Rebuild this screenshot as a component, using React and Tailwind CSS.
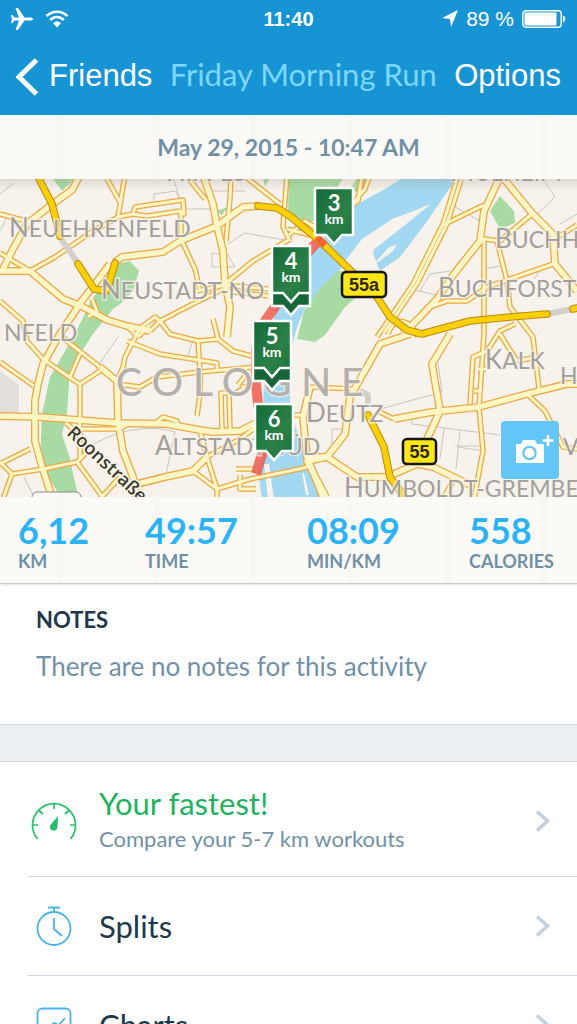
import React from 'react';

const stats = [
  { value: '6,12', label: 'KM' },
  { value: '49:57', label: 'TIME' },
  { value: '08:09', label: 'MIN/KM' },
  { value: '558', label: 'CALORIES' },
];

// Main streets
const wideRoads = [
  'M3 270L13 250L27 225L50 207L72 191L80 176',
  'M0 272H30L63 300L83 308L107 321L127 327L150 332',
  'M115 263L122 258L163 253L180 242L217 227L243 208L260 207',
  'M203 176L213 205L217 227L223 252L225 285L230 308L227 338',
  'M110 265L95 285L81 303L60 335L43 365L38 385L35 402V442L42 468L52 498',
  'M0 417L40 418L117 424L167 425L200 431L213 433L240 432L256 424',
  'M100 368L117 382L118 422L123 452L133 478L137 500',
  'M137 485L165 478L193 472L207 458',
  'M500 178L484 212L480 242L454 275L437 300L420 318L403 335',
  'M410 335L380 345L367 368L350 398L345 435L327 458L307 462L326 498',
  'M504 180L532 214L553 235L555 265L577 292',
  'M394 420L432 413L479 408L527 395L567 385H577',
  'M450 335L432 365L440 412L427 440L424 460',
  'M310 388L303 418L307 458L323 498',
  'M307 458L327 458L357 478H387L417 465L433 468L470 486',
];

// Side streets
const thinRoads = [
  'M0 254L30 272L55 258L90 234L118 218L133 215L147 217L180 212',
  'M0 215L22 221',
  'M118 218L125 176M107 180L121 205',
  'M133 215L135 208L183 201L184 215L180 212',
  'M181 212V240L195 270L200 292',
  'M231 176L230 200L226 242M189 180L205 200',
  'M243 176L280 205M287 176L283 228L290 242',
  'M225 285L253 262L290 240',
  'M197 292L225 286L268 290M225 292L268 297',
  'M150 332L160 322L187 308L223 290',
  'M160 322L155 318L140 329L137 335L125 358L123 368L117 382',
  'M127 327L137 337M150 326L138 338',
  'M0 302L23 322L27 342L43 360L72 380L80 385L100 372',
  'M0 363L34 387',
  'M60 335L68 343L100 368',
  'M80 385V460M80 355L70 378M92 300L97 312L88 318',
  'M66 424L73 430H120L128 425',
  'M157 423L163 418L177 422L178 427',
  'M127 342L160 355L217 364V371',
  'M117 385L140 388L157 378L200 373L256 368',
  'M160 322L170 335L198 342L218 340M213 320L218 340L233 352L255 358',
  'M198 342L200 373V395L197 417',
  'M222 430L221 394H229L230 430',
  'M200 432L207 458L240 440L256 428',
  'M193 472L217 490V500M207 458L217 490',
  'M217 490L250 480L290 472L307 468',
  'M240 476V490H256M236 470H256',
  'M0 463L12 475L43 470L77 463L104 500M12 475L3 500M30 450L0 465',
  'M77 463L88 452M100 500L120 478',
  'M457 180L443 225L413 285L377 338M443 226L484 206',
  'M461 181L447 225L417 285L384 334',
  'M532 215L500 242L484 240V335L479 408L483 452L474 500',
  'M497 242L507 282L510 308L533 338L539 390',
  'M430 308L447 302H467L487 288L553 265',
  'M380 413L394 420M310 388L354 390M287 416H303',
  'M527 395L545 412L563 448L577 450',
  'M487 352L473 358L470 405M517 362L537 358M500 335L517 362M487 352L500 332L515 325',
  'M478 370H486M474 392H482',
  'M352 205L365 190L370 176M340 214L358 202L362 176',
  'M287 230L310 236M287 238L305 222L325 235',
  'M455 478L443 500M555 240L577 226',
  'M388 335C396 314 412 322 418 338',
  'M238 386L246 376M236 394L246 388H242',
];

const footpaths = [
  'M0 232L6 220M0 195L14 184',
  'M154 203V195L176 192L180 202M172 176L180 200',
  'M184 210H214M205 192H245',
  'M228 245L245 234L290 242',
  'M212 254V268H235M212 254L228 256L235 268',
  'M96 370L118 338M24 478L34 498',
  'M80 455C110 430 150 425 175 433L165 480',
  'M188 356L194 338M420 292L430 275L450 272M410 290L436 296',
  'M540 176L555 198L532 220M577 215L560 225',
  'M450 205L480 222M485 270L505 266M534 280L540 272',
  'M380 410L442 393L438 365M412 420V425L500 436',
  'M444 430L440 460M460 432L456 470M479 447H455M484 452L458 448',
  'M332 450V430H345M500 430L540 442',
];

const greens = [
  'M50 176H78L62 192Z',
  'M115 265L130 262L139 272L133 292L120 305L113 310L93 335L70 370L67 415L62 435L70 460L73 475L79 500H62L40 465L42 415L50 378L75 335L90 304Z',
  'M289 176H345L330 200L315 222L305 224L288 212Z',
  'M350 190L358 178H372L362 196Z',
  'M490 212L500 197L514 212L515 224L500 230Z',
  'M216 212L228 208L222 216Z',
  'M263 178H270L265 188Z',
];

const placeNames = [
  { x: 9, y: 238, big: 'N', rest: 'EUEHRENFELD' },
  { x: 101, y: 300, big: 'N', rest: 'EUSTADT-NO' },
  { x: 4, y: 342, big: '', rest: 'NFELD' },
  { x: 166, y: 182, big: 'N', rest: 'IPPES' },
  { x: 450, y: 182, big: 'M', rest: 'ÜLHEIM' },
  { x: 495, y: 249, big: 'B', rest: 'UCHH' },
  { x: 438, y: 298, big: 'B', rest: 'UCHFORST' },
  { x: 485, y: 370, big: 'K', rest: 'ALK' },
  { x: 560, y: 385, big: '', rest: 'H' },
  { x: 306, y: 423, big: 'D', rest: 'EUTZ' },
  { x: 155, y: 456, big: 'A', rest: 'LTSTADT-SÜD' },
  { x: 563, y: 456, big: '', rest: 'V' },
  { x: 344, y: 498, big: 'H', rest: 'UMBOLDT-GREMBE' },
];

const markers = [
  { km: 3, x: 334, y: 189 },
  { km: 4, x: 291, y: 247, stacked: true },
  { km: 5, x: 272, y: 322, stacked: true },
  { km: 6, x: 274, y: 405 },
];

const highways = [
  'M36 174L52 205L60 237',
  'M78 265L94 290L106 292',
  'M115 264L108 288',
  'M258 207L277 209L290 217L320 242L347 268L377 298L390 318L407 331L422 335L440 330L470 322L510 318L547 315',
  'M573 310L577 309',
  'M368 416L384 448L390 478L406 500',
];

const flag = 'M-19 0H19V47H8L0 56L-8 47H-19Z';

const KmMarker = ({ km, x, y, stacked }) => (
  <g transform={`translate(${x} ${y})`}>
    {stacked && <path d={flag} transform="translate(0 13)" fill="#17663a" stroke="#fff" strokeWidth="2.5" />}
    <path d={flag} fill="url(#flagGreen)" stroke="#fff" strokeWidth="2.5" />
    <g fill="#fff" textAnchor="middle" className="font-[Lato,sans-serif] font-bold">
      <text y="23" fontSize="22">{km}</text>
      <text y="36" fontSize="14">km</text>
    </g>
  </g>
);

const RoadSign = ({ x, y, width, children }) => (
  <g>
    <rect x={x} y={y} width={width} height="25" rx="4" fill="#ffe619" stroke="#151515" strokeWidth="2.5" />
    <text
      x={x + width / 2}
      y={y + 19}
      textAnchor="middle"
      fontSize="18"
      fill="#2b2a1a"
      className="font-['Liberation_Sans',sans-serif] font-bold"
    >
      {children}
    </text>
  </g>
);

const RouteMap = () => (
  <svg viewBox="0 180 577 318" className="block w-full h-auto" role="img" aria-label="Route map">
    <defs>
      <linearGradient id="flagGreen" x1="0" y1="0" x2="1" y2="1">
        <stop offset="0" stopColor="#146a38" />
        <stop offset="0.6" stopColor="#2b8148" />
        <stop offset="1" stopColor="#17703b" />
      </linearGradient>
      <linearGradient id="mapShade" x1="0" y1="0" x2="0" y2="1">
        <stop offset="0" stopColor="#8a8578" stopOpacity="0.22" />
        <stop offset="1" stopColor="#8a8578" stopOpacity="0" />
      </linearGradient>
    </defs>
    <rect y="176" width="577" height="326" fill="#f7f3ec" />
    <path d="M0 372L19 386V414H0Z" fill="#e2dfdc" />
    <path d="M310 178L322 176L330 188L312 194Z" fill="#e2dfdc" />
    <g fill="#a8dba3">
      {greens.map((d) => <path key={d} d={d} />)}
    </g>

    {/* Rhine */}
    <path
      d="M408 176L385 190L354 207L330 232L308 258L292 282L276 312C266 345 262 385 264 420L266 450L258 472L262 500H322L308 470L300 440L290 415L290 373C290 350 296 325 307 306L337 274L352 256L364 240L392 220L430 206L372 252L380 272L400 258L425 225L459 176Z"
      fill="#a2d8f2"
    />
    <path d="M430 205L385 225L362 240L345 262L375 276L372 260L374 250L400 230Z" fill="#f7f3ec" />
    <path d="M397 245L388 249L374 265L380 262L393 252Z" fill="#f7f3ec" />
    <path d="M297 340L304 312L320 290L337 272H352L360 295L345 308L325 336L315 343Z" fill="#a8dba3" />
    <path d="M264 465L268 500H274L269 465ZM302 474L306 496H309L304 474Z" fill="#f7f3ec" />

    <g fill="none" stroke="#c9c5bf" strokeWidth="1">
      {footpaths.map((d) => <path key={d} d={d} />)}
    </g>
    <g fill="none" strokeLinejoin="round">
      <g stroke="#eaa945">
        {thinRoads.map((d) => <path key={d} d={d} strokeWidth="5.6" />)}
        {wideRoads.map((d) => <path key={d} d={d} strokeWidth="8" />)}
      </g>
      <g stroke="#fef6c4">
        {thinRoads.map((d) => <path key={d} d={d} strokeWidth="3" />)}
        {wideRoads.map((d) => <path key={d} d={d} strokeWidth="5.4" />)}
      </g>
      <path d="M61 240L78 264M547 315L573 310M360 392L368 396V405" stroke="#d3d0cc" strokeWidth="6" />
      <path
        d="M320 240L300 262L277 305L263 325L256 350L256 385L258 405L264 430L262 455L256 475"
        stroke="#f05b4f"
        strokeWidth="10"
        strokeOpacity="0.85"
      />
      <g strokeLinecap="round">
        {highways.map((d) => <path key={d} d={d} stroke="#bd8a12" strokeWidth="7.6" />)}
        {highways.map((d) => <path key={d} d={d} stroke="#fcd006" strokeWidth="5.6" />)}
      </g>
      <path d="M317 238L325 246" stroke="#f5622f" strokeWidth="7" />
    </g>

    <g
      fill="#a29f9c"
      stroke="#f7f3ec"
      strokeWidth="3"
      strokeOpacity="0.7"
      paintOrder="stroke"
      className="font-[Lato,sans-serif]"
    >
      <text x="116" y="397" fontSize="39" fill="#b4b0ac" className="font-medium">C O L O G N E</text>
      {placeNames.map(({ x, y, big, rest }) => (
        <text key={`${x}-${y}`} x={x} y={y} fontSize="23">
          {big && <tspan fontSize="26">{big}</tspan>}
          {rest}
        </text>
      ))}
    </g>
    <text
      transform="translate(66 435) rotate(43)"
      fontSize="18"
      fill="#3b3835"
      stroke="#fbf7e6"
      strokeWidth="3"
      paintOrder="stroke"
      className="font-['Open_Sans',sans-serif] font-semibold"
    >
      Roonstraße
    </text>
    <rect x="32" y="493" width="49" height="20" rx="5" fill="#fbf9f5" stroke="#8d8a85" />

    <RoadSign x={342} y={273} width={44}>55a</RoadSign>
    <RoadSign x={403} y={440} width={33}>55</RoadSign>
    {markers.map((marker) => <KmMarker key={marker.km} {...marker} />)}
    <rect y="180" width="577" height="12" fill="url(#mapShade)" />
  </svg>
);

const StatusBar = () => (
  <div className="grid grid-cols-3 items-center h-[38px] px-[11px] text-xl font-['Liberation_Sans',sans-serif]">
    <div className="flex items-center gap-3">
      <svg width="22" height="22" viewBox="0 0 22 22" fill="#fff" aria-hidden="true">
        <path d="M22 11C22 10 20.500 9.500 19 9.500H13.500L7 0H4.500L8 9.500H3.500L1.500 7H0L1 11L0 15H1.500L3.500 12.500H8L4.500 22H7L13.500 12.500H19C20.500 12.500 22 12 22 11Z" />
      </svg>
      <svg width="24" height="18" viewBox="0 0 24 18" fill="none" stroke="#fff" strokeWidth="2.600" aria-hidden="true">
        <path d="M1.500 6.200C7.500 0.200 16.500 0.200 22.500 6.200" />
        <path d="M5.200 10C9.200 6 14.800 6 18.800 10" />
        <path d="M8 13.200C10.200 11 13.800 11 16 13.200L12 17.500Z" fill="#fff" stroke="none" />
      </svg>
    </div>
    <span className="text-center font-bold">11:40</span>
    <div className="flex items-center justify-end gap-2">
      <svg width="16" height="17" viewBox="0 0 16 17" fill="#fff" aria-hidden="true">
        <path d="M16 0L9 17L8 9L0 8Z" />
      </svg>
      <span className="whitespace-nowrap text-[21px]">89 %</span>
      <svg width="44" height="18" viewBox="0 0 44 18" aria-hidden="true">
        <rect x="0.800" y="0.800" width="38.400" height="16.400" rx="3" fill="none" stroke="#fff" strokeWidth="1.400" />
        <rect x="2.500" y="2.500" width="32" height="13" rx="1" fill="#fff" />
        <path d="M41 5.500C44 6 44 12 41 12.500Z" fill="#fff" />
      </svg>
    </div>
  </div>
);

const RowChevron = () => (
  <svg width="16" height="24" viewBox="0 0 16 24" fill="none" stroke="#c5d0da" strokeWidth="3.600" aria-hidden="true">
    <path d="M2 2.500L12.500 12L2 21.500" />
  </svg>
);

const SpeedIcon = () => (
  <svg width="46" height="38" viewBox="0 0 46 38" fill="none" stroke="#27bf69" strokeWidth="1.700" aria-hidden="true">
    <path d="M6.500 37A21.500 21.500 0 1 1 39.500 37" />
    <path d="M1.500 23H7M39 23H44.500M23 1.500V7M8 8.500L12 12M38 8.500L34 12" />
    <path d="M27 14L26.500 25A3.800 3.800 0 1 1 19.800 22.500Z" fill="#27bf69" stroke="none" />
  </svg>
);

const StopwatchIcon = () => (
  <svg width="36" height="40" viewBox="0 0 36 40" fill="none" stroke="#45b5ea" strokeWidth="1.800" aria-hidden="true">
    <circle cx="18" cy="22.500" r="16.500" />
    <path d="M12 1.500H24M18 1.500V6M18 12V23L26 30" />
  </svg>
);

const ChartIcon = () => (
  <svg width="36" height="36" viewBox="0 0 36 36" fill="none" stroke="#45b5ea" strokeWidth="1.800" aria-hidden="true">
    <rect x="1.500" y="1.500" width="33" height="33" rx="5" />
    <path d="M6 26L18 16L23 18L29 11" />
  </svg>
);

const ActivityRow = ({ icon, title, subtitle, titleClass, className }) => (
  <li className="pl-[27px]">
    <a href="#" className={`flex items-center border-b border-[#cfd6de] pr-[26px] ${className}`}>
      <span className="flex w-[54px] shrink-0 justify-center">{icon}</span>
      <span className="ml-[18px] grow">
        <span className={`block text-[31px] leading-9 ${titleClass}`}>{title}</span>
        {subtitle && <span className="block text-[22px] leading-9 text-[#7191a8]">{subtitle}</span>}
      </span>
      <RowChevron />
    </a>
  </li>
);

const panelLines =
  'bg-[#fcfaf6] bg-[repeating-linear-gradient(90deg,transparent_0px,transparent_54px,#f9f7f3_58px,#f9f7f3_61px,transparent_65px,transparent_97px)]';

const App = () => {
  return (
    <div className="flex flex-col h-screen overflow-hidden bg-white font-[Lato,sans-serif]">
      <header className="shrink-0 bg-[#1794d4] text-white">
        <StatusBar />
        <nav className="flex items-center justify-between h-[77px] pl-[15px] pr-4 font-['Liberation_Sans',sans-serif]">
          <button type="button" className="flex items-center gap-[10px] text-[31px]">
            <svg width="24" height="38" viewBox="0 0 24 38" fill="none" stroke="#fff" strokeWidth="5" aria-hidden="true">
              <path d="M21.500 2L4 19L21.500 36" />
            </svg>
            Friends
          </button>
          <h1 className="pb-1 text-[31px] whitespace-nowrap text-[#7ed7ff] font-[Lato,sans-serif]">Friday Morning Run</h1>
          <button type="button" className="text-[31px]">Options</button>
        </nav>
      </header>

      <main className="grow overflow-y-auto [scrollbar-width:none]">
        <div className={`flex items-center justify-center h-16 text-[23px] font-bold text-[#7090a6] ${panelLines}`}>
          May 29, 2015 - 10:47 AM
        </div>

        {/* Map */}
        <section className="relative">
          <RouteMap />
          <button
            type="button"
            aria-label="Add photo"
            className="absolute right-[18px] bottom-[18px] flex items-center justify-center size-[58px] rounded bg-[#62c6f8]"
          >
            <svg width="58" height="58" viewBox="0 0 58 58" fill="none" aria-hidden="true">
              <path d="M15 23H20L22 19H34L36 23H43V42H15Z" fill="#fff" />
              <circle cx="28.500" cy="32" r="6.200" stroke="#62c6f8" strokeWidth="2.200" />
              <path d="M47 14V25M41.500 19.500H52.500" stroke="#fff" strokeWidth="2.600" />
            </svg>
          </button>
        </section>

        {/* Stats */}
        <section className={`border-b border-[#cfccc9] shadow-sm ${panelLines}`}>
          <dl className="grid grid-cols-[127fr_162fr_162fr_108fr] pl-[18px] pt-3 pb-3">
            {stats.map((stat) => (
              <div key={stat.label} className="flex flex-col-reverse">
                <dt className="text-lg leading-5 font-bold text-[#7090a6]">{stat.label}</dt>
                <dd className="text-4xl leading-[42px] font-bold text-[#2cb3f6]">{stat.value}</dd>
              </div>
            ))}
          </dl>
        </section>

        {/* Notes */}
        <section className="px-9 pt-5 pb-10">
          <h2 className="text-[22px] leading-8 font-bold text-[#21384a]">NOTES</h2>
          <p className="mt-3 text-[26px] leading-9 text-[#7191a8] [font-variant-ligatures:none]">
            There are no notes for this activity
          </p>
        </section>

        <div className="h-[38px] border-y border-[#d3dae0] bg-[#eaf0f3]"></div>

        <ul>
          <ActivityRow
            icon={<SpeedIcon />}
            title="Your fastest!"
            subtitle="Compare your 5-7 km workouts"
            titleClass="text-[#1fb25f]"
            className="h-[115px] pt-1"
          />
          <ActivityRow icon={<StopwatchIcon />} title="Splits" titleClass="text-[#21384a]" className="h-[99px]" />
          <ActivityRow icon={<ChartIcon />} title="Charts" titleClass="text-[#21384a]" className="h-[99px]" />
        </ul>
      </main>
    </div>
  );
};

export default App;
